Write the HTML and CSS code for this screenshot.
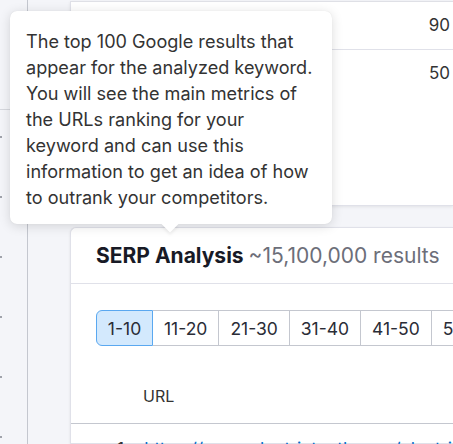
FILE: index.html
```html
<!DOCTYPE html>
<html>
<head>
<meta charset="utf-8">
<link rel="stylesheet" href="styles.css">
</head>
<body>
<div class="page">
  <aside class="sidebar">
    <div class="side-top"></div>
    <div class="dots">
      <span class="dot"></span><span class="dot"></span><span class="dot"></span>
      <span class="dot"></span><span class="dot"></span><span class="dot"></span>
    </div>
  </aside>
  <main class="main">
    <section class="card top-card">
      <div class="row"><span class="num">90</span></div>
      <div class="row last"><span class="num">50</span></div>
    </section>
    <section class="card serp">
      <header class="serp-head">
        <h2 class="title">SERP Analysis <span class="count">~15,100,000 results</span></h2>
      </header>
      <div class="serp-body">
        <div class="tabs">
          <span class="tab active">1-10</span>
          <span class="tab">11-20</span>
          <span class="tab">21-30</span>
          <span class="tab">31-40</span>
          <span class="tab">41-50</span>
          <span class="tab">51-60</span>
        </div>
        <div class="thead"><span class="th-url">URL</span></div>
        <div class="trow"><span class="pos">1</span><span class="link">https://www.electricteeth.com/electric-toothbrush</span></div>
      </div>
    </section>
  </main>
  <div class="tooltip">
    <p>The top 100 Google results that appear for the analyzed keyword. You will see the main metrics of the URLs ranking for your keyword and can use this information to get an idea of how to outrank your competitors.</p>
    <span class="arrow"></span>
  </div>
</div>
</body>
</html>
```

FILE: styles.css
```css
html, body {
  margin: 0;
  padding: 0;
}
body {
  width: 453px;
  height: 444px;
  overflow: hidden;
  background: #f4f5f9;
  font-family: Inter, "Noto Sans", sans-serif;
  color: #333;
}
.page {
  position: relative;
  display: flex;
  height: 444px;
  overflow: hidden;
}
.sidebar {
  width: 27px;
  flex: none;
  border-right: 1px solid #c4c7cf;
  display: flex;
  flex-direction: column;
}
.side-top {
  height: 109px;
  border-bottom: 1px solid #d6d8de;
}
.dots {
  display: flex;
  flex-direction: column;
  gap: 58px;
  padding-top: 26px;
}
.dot {
  display: block;
  width: 2px;
  height: 2px;
  background: #a0a3ab;
}
.main {
  margin-left: 42px;
  flex: 1;
  min-width: 0;
  display: flex;
  flex-direction: column;
  gap: 21px;
  padding-top: 1px;
}
.card {
  background: #fff;
  border: 1px solid #e0e1e9;
  border-right: none;
  box-shadow: 0 1px 3px rgba(0,0,0,0.08);
}
.top-card {
  flex: none;
  height: 205px;
  box-sizing: border-box;
  border-top-color: #dfe0e6;
}
.row {
  height: 48px;
  border-bottom: 1px solid #e0e1e9;
  display: flex;
  justify-content: flex-end;
  align-items: flex-start;
  padding: 13px 3px 0 0;
  box-sizing: border-box;
  font-size: 17px;
}
.row.last {
  border-bottom: none;
}
.serp {
  flex: 1;
  min-height: 0;
  border-radius: 6px 0 0 0;
}
.serp-head {
  height: 55px;
  border-bottom: 1px solid #e0e1e9;
  padding-left: 25px;
  display: flex;
  align-items: center;
}
.title {
  margin: 0;
  font-size: 21px;
  font-weight: 700;
  color: #181a26;
  white-space: nowrap;
}
.count {
  font-weight: 400;
  color: #6c6e79;
}
.serp-body {
  padding-top: 26px;
}
.tabs {
  display: flex;
  margin-left: 25px;
  height: 36px;
  white-space: nowrap;
}
.tab {
  display: flex;
  align-items: center;
  justify-content: center;
  box-sizing: border-box;
  padding: 0 11px;
  border: 1px solid #c4c7cf;
  border-left: none;
  font-size: 17.5px;
  color: #2a2c36;
}
.tab.active {
  background: #d3e9fd;
  border: 1px solid #5aa8f0;
  border-radius: 6px 0 0 6px;
  width: 57px;
}
.tab:nth-child(2) { width: 68px; }
.tab:nth-child(3) { width: 71px; }
.tab:nth-child(4) { width: 71px; }
.tab:nth-child(5) { width: 73px; }
.thead {
  height: 78px;
  border-bottom: 1px solid #c4c7cf;
  display: flex;
  align-items: center;
  padding-left: 72px;
  box-sizing: border-box;
}
.th-url {
  font-size: 16px;
  padding-top: 22px;
}
.trow {
  display: flex;
  gap: 20px;
  padding: 14px 0 0 46px;
  white-space: nowrap;
  font-size: 17.5px;
}
.link {
  color: #006dca;
}
.tooltip {
  position: absolute;
  left: 10px;
  top: 11px;
  width: 322px;
  height: 213px;
  box-sizing: border-box;
  background: #fff;
  border-radius: 7px;
  box-shadow: 0 2px 12px rgba(0,0,0,0.14), 0 0 1px rgba(0,0,0,0.1);
  padding: 17px 18px 0 16px;
}
.tooltip p {
  margin: 0;
  font-size: 18.1px;
  line-height: 26px;
  color: #333;
}
.arrow {
  position: absolute;
  left: 154px;
  bottom: -6px;
  width: 12px;
  height: 12px;
  background: #fff;
  transform: rotate(45deg);
  box-shadow: 2px 2px 3px rgba(0,0,0,0.06);
}
```
